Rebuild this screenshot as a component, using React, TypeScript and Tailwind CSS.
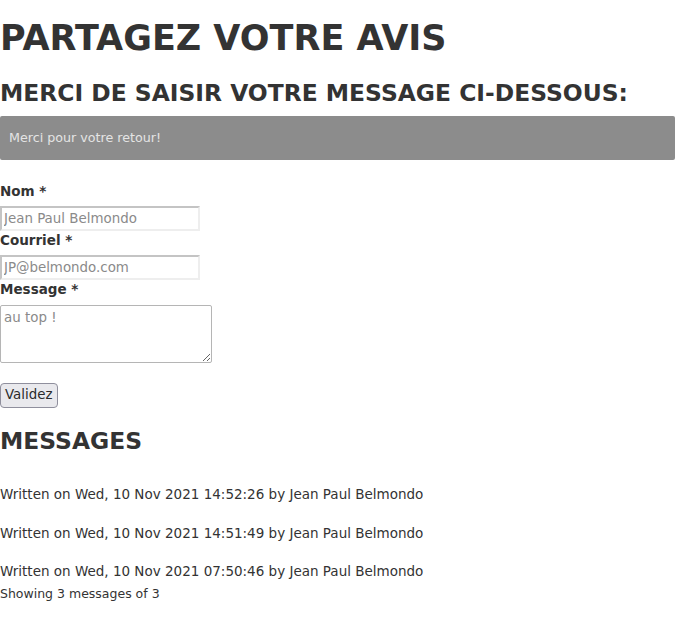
import React from 'react';

const messages = [
  'Written on Wed, 10 Nov 2021 14:52:26 by Jean Paul Belmondo',
  'Written on Wed, 10 Nov 2021 14:51:49 by Jean Paul Belmondo',
  'Written on Wed, 10 Nov 2021 07:50:46 by Jean Paul Belmondo',
];

const App = () => {
  return (
    <div className="min-h-screen bg-white text-[#333] text-[13.5px] font-['DejaVu_Sans',sans-serif]">
      <h1 className="text-[35px] font-bold leading-[40px] pt-[18px]">PARTAGEZ VOTRE AVIS</h1>
      <h2 className="text-[23.4px] font-bold leading-[28px] mt-[21px]">MERCI DE SAISIR VOTRE MESSAGE CI-DESSOUS:</h2>

      <div className="mt-[9px] h-[44px] bg-[#8c8c8c] rounded-[2px] flex items-center px-[9px]">
        <span className="text-[12.7px] text-[#e4e4e4]">Merci pour votre retour!</span>
      </div>

      {/* form */}
      <form className="mt-[22px] flex flex-col items-start">
        <label className="font-bold leading-[18px]">Nom *</label>
        <input
          className="mt-[6px] w-[200px] h-[25px] border-2 border-[#c4c4c4] border-b-[#eeeeee] border-r-[#eeeeee] px-[2px] text-[13.4px] placeholder:text-[#8a8a8a] outline-none"
          placeholder="Jean Paul Belmondo"
        />
        <label className="font-bold leading-[18px]">Courriel *</label>
        <input
          className="mt-[6px] w-[200px] h-[25px] border-2 border-[#c4c4c4] border-b-[#eeeeee] border-r-[#eeeeee] px-[2px] text-[13.4px] placeholder:text-[#8a8a8a] outline-none"
          placeholder="JP@belmondo.com"
        />
        <label className="font-bold leading-[18px]">Message *</label>
        <textarea
          className="mt-[7px] w-[212px] h-[58px] border border-[#b5b5b5] rounded-[2px] px-[3px] py-[2px] text-[13.4px] placeholder:text-[#8a8a8a] outline-none"
          placeholder="au top !"
        />
        <button
          type="button"
          className="mt-[20px] h-[25px] px-[4px] bg-[#e9e9ed] border border-[#8f8f9d] rounded-[4px] text-[13.4px] text-[#2b2b2b]"
        >
          Validez
        </button>
      </form>

      <h2 className="text-[23.4px] font-bold leading-[28px] mt-[19px]">MESSAGES</h2>

      <div className="mt-[30px] flex flex-col gap-[20.5px]">
        {messages.map((m) => (
          <p key={m} className="leading-[18px]">{m}</p>
        ))}
      </div>
      <p className="text-[12.5px] leading-[16px] mt-[6px]">Showing 3 messages of 3</p>
    </div>
  );
};

export default App;
